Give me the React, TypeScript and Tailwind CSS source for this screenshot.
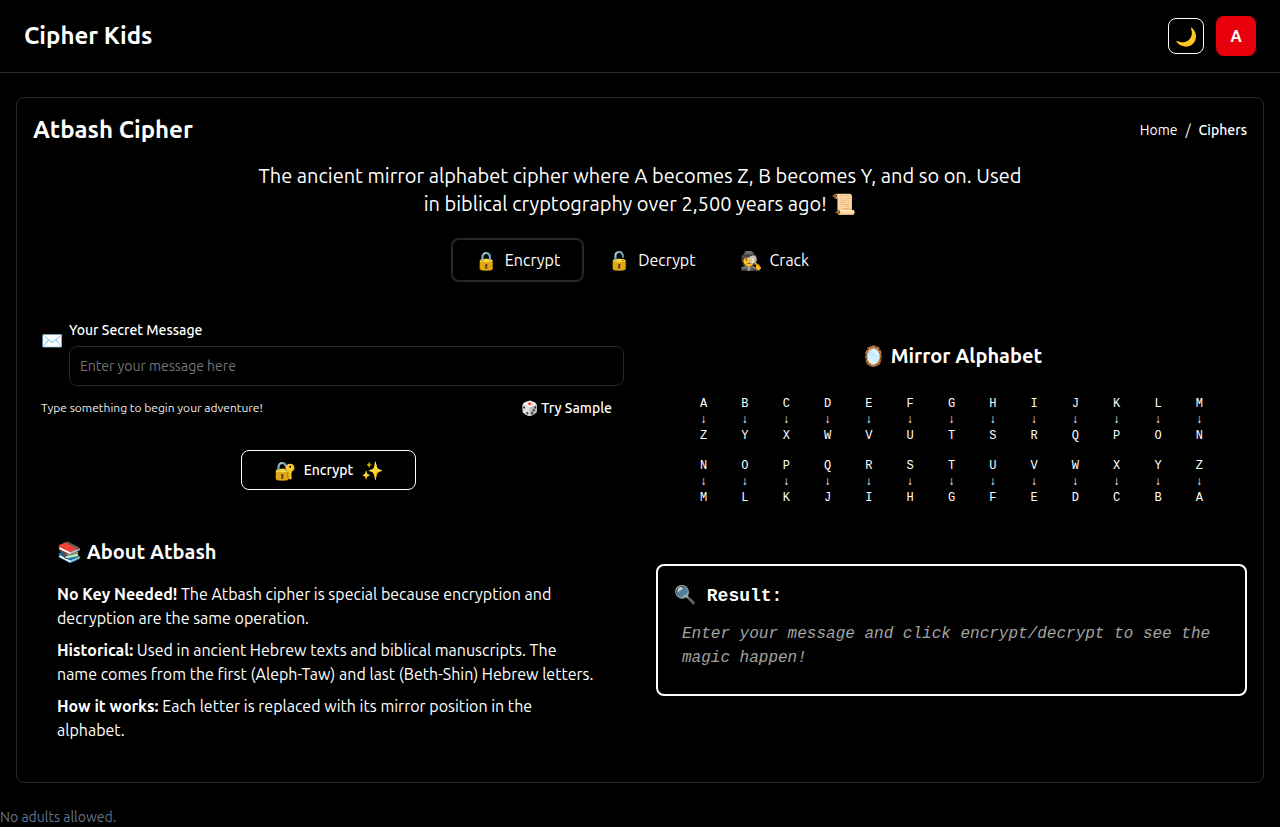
import React, { useState } from "react";

const ALPHABET = "ABCDEFGHIJKLMNOPQRSTUVWXYZ".split("");
const mirror = (letter: string) => ALPHABET[25 - ALPHABET.indexOf(letter)];

const MODES = [
  { id: "encrypt", icon: "🔒", label: "Encrypt" },
  { id: "decrypt", icon: "🔓", label: "Decrypt" },
  { id: "crack", icon: "🕵️", label: "Crack" },
];

const FACTS = [
  {
    title: "No Key Needed!",
    text: "The Atbash cipher is special because encryption and decryption are the same operation.",
  },
  {
    title: "Historical:",
    text: "Used in ancient Hebrew texts and biblical manuscripts. The name comes from the first (Aleph-Taw) and last (Beth-Shin) Hebrew letters.",
  },
  {
    title: "How it works:",
    text: "Each letter is replaced with its mirror position in the alphabet.",
  },
];

function Header() {
  return (
    <header className="flex items-center justify-between border-b border-[#27272a] px-6 py-4">
      <span className="text-2xl font-semibold">Cipher Kids</span>
      <div className="flex items-center gap-3">
        <button
          aria-label="Toggle theme"
          className="flex size-9 items-center justify-center rounded-lg border border-white text-lg"
        >
          🌙
        </button>
        <button
          aria-label="Account"
          className="flex size-10 items-center justify-center rounded-lg bg-[#e7000b] font-semibold"
        >
          A
        </button>
      </div>
    </header>
  );
}

function ModeTabs({ mode, onChange }: { mode: string; onChange: (id: string) => void }) {
  return (
    <div className="mt-5 flex justify-center gap-1">
      {MODES.map((m) => (
        <button
          key={m.id}
          onClick={() => onChange(m.id)}
          className={
            m.id === mode
              ? "flex h-11 items-center gap-2 rounded-lg border-2 border-[#27272a] px-[22px]"
              : "flex h-11 items-center gap-2 rounded-lg px-5"
          }
        >
          <span className="text-lg">{m.icon}</span>
          {m.label}
        </button>
      ))}
    </div>
  );
}

function MessageForm() {
  return (
    <form onSubmit={(e) => e.preventDefault()}>
      <div className="flex items-start pl-2">
        <span className="w-7 pt-2.5 text-lg leading-5">✉️</span>
        <div className="flex min-w-0 grow flex-col gap-1.5">
          <label htmlFor="message" className="text-sm font-medium">
            Your Secret Message
          </label>
          <input
            id="message"
            type="text"
            placeholder="Enter your message here"
            className="h-10 w-full rounded-lg border border-[#27272a] bg-transparent px-2.5 text-sm placeholder:text-[#757575]"
          />
        </div>
      </div>
      <div className="mt-1 flex items-center justify-between pr-3 pl-2">
        <span className="text-xs text-[#ededed]">Type something to begin your adventure!</span>
        <button type="button" className="h-9 text-sm font-medium">
          🎲 Try Sample
        </button>
      </div>
      <div className="mt-6 flex justify-center">
        <button
          type="submit"
          className="flex h-10 items-center gap-2 rounded-lg border border-white px-8 text-sm font-medium"
        >
          <span className="text-lg">🔐</span>
          Encrypt
          <span className="text-lg">✨</span>
        </button>
      </div>
    </form>
  );
}

function About() {
  return (
    <section className="mt-12 px-6 pb-6">
      <h2 className="text-xl font-semibold">📚 About Atbash</h2>
      <div className="mt-4 flex flex-col gap-2">
        {FACTS.map((fact) => (
          <p key={fact.title}>
            <strong className="font-bold">{fact.title}</strong> {fact.text}
          </p>
        ))}
      </div>
    </section>
  );
}

function MirrorAlphabet() {
  return (
    <section className="pt-[22px]">
      <h2 className="text-center text-xl font-semibold">🪞 Mirror Alphabet</h2>
      <div className="mt-[26px] grid grid-cols-13 gap-x-0.5 gap-y-3.5 px-7 text-center font-['Liberation_Mono',monospace] text-xs">
        {ALPHABET.map((letter) => (
          <div key={letter}>
            <div>{letter}</div>
            <div>↓</div>
            <div>{mirror(letter)}</div>
          </div>
        ))}
      </div>
    </section>
  );
}

function Result() {
  return (
    <section className="mt-[58px] rounded-lg border-2 border-white p-4 font-['Liberation_Mono',monospace]">
      <h2 className="text-lg font-bold">🔍 Result:</h2>
      <p className="px-2 pt-3 pb-2 text-[#a3a3a3] italic">
        Enter your message and click encrypt/decrypt to see the magic happen!
      </p>
    </section>
  );
}

export default function App() {
  const [mode, setMode] = useState("encrypt");
  return (
    <div className="min-h-screen bg-black font-['Ubuntu','Ubuntu_Sans','Open_Sans',sans-serif] text-white">
      <Header />
      <main className="px-4 py-6">
        <div className="rounded-lg border border-[#27272a] p-4">
          <div className="flex items-center justify-between">
            <h1 className="text-2xl font-semibold">Atbash Cipher</h1>
            <nav className="flex gap-2 text-sm">
              <a href="#home">Home</a>
              <span>/</span>
              <a href="#ciphers" className="font-medium">
                Ciphers
              </a>
            </nav>
          </div>
          <p className="mx-auto mt-4 max-w-3xl text-center text-xl">
            The ancient mirror alphabet cipher where A becomes Z, B becomes Y, and so on. Used in
            biblical cryptography over 2,500 years ago! 📜
          </p>
          <ModeTabs mode={mode} onChange={setMode} />
          <div className="mt-[38px] grid grid-cols-2 gap-8">
            <div>
              <MessageForm />
              <About />
            </div>
            <div>
              <MirrorAlphabet />
              <Result />
            </div>
          </div>
        </div>
      </main>
      <footer className="text-sm text-[#64748b]">No adults allowed.</footer>
    </div>
  );
}
